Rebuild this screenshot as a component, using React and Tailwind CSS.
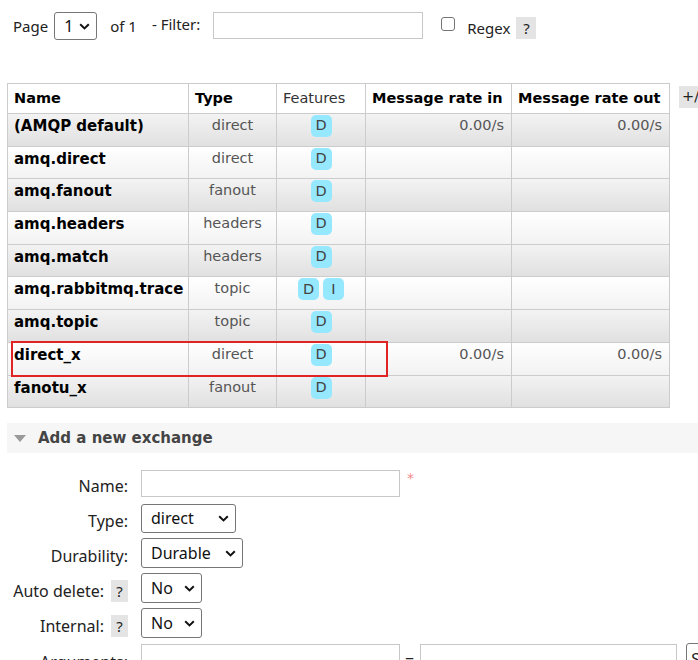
import React from "react";

const rows = [
  { name: "(AMQP default)", type: "direct", f: ["D"], inR: "0.00/s", outR: "0.00/s" },
  { name: "amq.direct", type: "direct", f: ["D"] },
  { name: "amq.fanout", type: "fanout", f: ["D"] },
  { name: "amq.headers", type: "headers", f: ["D"] },
  { name: "amq.match", type: "headers", f: ["D"] },
  { name: "amq.rabbitmq.trace", type: "topic", f: ["D", "I"] },
  { name: "amq.topic", type: "topic", f: ["D"] },
  { name: "direct_x", type: "direct", f: ["D"], inR: "0.00/s", outR: "0.00/s" },
  { name: "fanotu_x", type: "fanout", f: ["D"] },
];

const vf = { fontFamily: '"DejaVu Sans", Verdana, sans-serif' };
const sf = { fontFamily: '"Noto Sans", "Open Sans", sans-serif' };

function Chevron() {
  return (
    <svg width="11" height="7" viewBox="0 0 11 7" className="shrink-0">
      <path d="M1.2 1.2 L5.5 5.4 L9.8 1.2" fill="none" stroke="#111" strokeWidth="2" />
    </svg>
  );
}

function Sel({ w, h = "h-[29px]", size = "text-[16px]", children }) {
  return (
    <div
      className={`flex items-center justify-between rounded-[3px] border border-[#767676] bg-white pl-[9px] pr-[6px] text-[#111] ${size} ${w} ${h}`}
      style={sf}
    >
      <span className="leading-none">{children}</span>
      <Chevron />
    </div>
  );
}

function Help() {
  return (
    <span className="flex h-[22px] w-[17px] items-center justify-center bg-[#e4e4e4] text-[15px] text-[#222]" style={sf}>
      ?
    </span>
  );
}

function Badge({ t }) {
  return (
    <span
      className="flex h-[22px] w-[21px] items-center justify-center rounded-[5px] bg-[#96e8ff] text-[14.5px] text-[#444]"
      style={vf}
    >
      {t}
    </span>
  );
}

function FormRow({ label, help, children, className = "h-[30px] items-center", shift = "translate-y-[3px]" }) {
  return (
    <div className={`flex ${className}`}>
      <div
        className={`flex w-[128px] shrink-0 items-center justify-end gap-[7px] text-[16px] leading-[22px] text-[#222] ${shift}`}
        style={sf}
      >
        <span>{label}</span>
        {help && <Help />}
      </div>
      <div className="ml-[13px] flex items-center">{children}</div>
    </div>
  );
}

const tdBase = "border border-[#cccccc] align-top";

export default function App() {
  return (
    <div className="relative h-[660px] w-[698px] overflow-hidden bg-white text-[#222]">
      {/* top bar */}
      <div className="flex h-[52px] items-start pl-[13px] pt-[12px] text-[15px] leading-[20px] text-[#222]" style={sf}>
        <span className="mt-[4px]">Page</span>
        <div className="ml-[6px]">
          <Sel w="w-[43px]" h="h-[28px]">1</Sel>
        </div>
        <span className="ml-[13px] mt-[4px]">of 1</span>
        <span className="ml-[15px] mt-[2px]">- Filter:</span>
        <div className="ml-[13px] h-[27px] w-[210px] border border-[#c8c8c8] bg-white" />
        <div className="ml-[18px] mt-[5px] h-[14px] w-[14px] rounded-[3px] border border-[#767676] bg-white" />
        <span className="ml-[12px] mt-[6px]">Regex</span>
        <div className="ml-[6px] mt-[5px] flex h-[22px] w-[20px] items-center justify-center bg-[#e4e4e4]">?</div>
      </div>

      {/* table */}
      <div className="ml-[7px] mt-[31px] flex items-start">
        <table className="w-[662px] shrink-0 table-fixed border-collapse" style={vf}>
          <colgroup>
            <col className="w-[181px]" />
            <col className="w-[88px]" />
            <col className="w-[89px]" />
            <col className="w-[146px]" />
            <col className="w-[158px]" />
          </colgroup>
          <thead>
            <tr className="bg-white text-[14.5px] text-black">
              <th className="h-[30px] border border-[#cccccc] px-[6px] text-left font-bold">Name</th>
              <th className="border border-[#cccccc] px-[6px] text-left font-bold">Type</th>
              <th className="border border-[#cccccc] px-[6px] text-left font-normal text-[#333]">Features</th>
              <th className="border border-[#cccccc] px-[6px] text-left font-bold">Message rate in</th>
              <th className="border border-[#cccccc] px-[6px] text-left font-bold">Message rate out</th>
            </tr>
          </thead>
          <tbody>
            {rows.map((r, i) => (
              <tr
                key={r.name}
                className={
                  i % 2 === 0
                    ? "bg-linear-to-b from-[#f3f3f3] to-[#e0e0e0]"
                    : "bg-linear-to-b from-white to-[#f2f2f2]"
                }
              >
                <td className={`${tdBase} h-[32.7px] px-[6px] pt-[3px] text-[15px] font-bold leading-[18px] text-black`}>
                  {r.name}
                </td>
                <td className={`${tdBase} px-[6px] pt-[2px] text-center text-[14.5px] leading-[18px] text-[#555]`}>
                  {r.type}
                </td>
                <td className={`${tdBase} px-[6px] pt-[1px]`}>
                  <div className="flex justify-center gap-[4px]">
                    {r.f.map((t) => (
                      <Badge key={t} t={t} />
                    ))}
                  </div>
                </td>
                <td className={`${tdBase} pl-[6px] pr-[7px] pt-[2px] text-right text-[14.5px] leading-[18px] text-[#555]`}>
                  {r.inR || ""}
                </td>
                <td className={`${tdBase} pl-[6px] pr-[7px] pt-[2px] text-right text-[14.5px] leading-[18px] text-[#555]`}>
                  {r.outR || ""}
                </td>
              </tr>
            ))}
          </tbody>
        </table>
        <div
          className="ml-[9px] mt-[3px] flex h-[22px] w-[40px] shrink-0 items-center bg-[#e4e4e4] pl-[3px] text-[14.5px] text-[#222]"
          style={vf}
        >
          +/-
        </div>
      </div>

      {/* red annotation box */}
      <div className="pointer-events-none absolute left-[11px] top-[341px] h-[36px] w-[377px] border-2 border-[#e02424]" />

      {/* section header */}
      <div className="ml-[7px] mt-[15px] flex h-[30px] items-center bg-[#f6f6f6]">
        <svg width="12" height="7" viewBox="0 0 12 7" className="ml-[7px]">
          <path d="M0 0 L12 0 L6 7 Z" fill="#9a9a9a" />
        </svg>
        <span className="ml-[12px] text-[15px] font-bold text-[#444]" style={vf}>
          Add a new exchange
        </span>
      </div>

      {/* form */}
      <div className="mt-[15px] flex flex-col gap-[5px]">
        <FormRow label="Name:">
          <div className="h-[27px] w-[259px] border border-[#c8c8c8] bg-white" />
          <span className="ml-[7px] -translate-y-[5px] text-[14px] text-[#f28b8b]" style={vf}>*</span>
        </FormRow>
        <FormRow label="Type:">
          <Sel w="w-[95px]">direct</Sel>
        </FormRow>
        <FormRow label="Durability:">
          <Sel w="w-[102px]" h="h-[30px]">Durable</Sel>
        </FormRow>
        <FormRow label="Auto delete:" help>
          <Sel w="w-[61px]" h="h-[30px]">No</Sel>
        </FormRow>
        <FormRow label="Internal:" help>
          <Sel w="w-[61px]" h="h-[30px]">No</Sel>
        </FormRow>
        <FormRow label="Arguments:" className="h-[30px] items-start" shift="translate-y-[8px]">
          <div className="h-[28px] w-[259px] border border-[#c8c8c8] bg-white" />
          <span className="ml-[5px] mt-[4px] text-[16px] text-[#222]" style={sf}>=</span>
          <div className="ml-[6px] h-[28px] w-[257px] border border-[#c8c8c8] bg-white" />
          <div
            className="ml-[9px] flex h-[30px] w-[60px] items-start rounded-[3px] border border-[#767676] pl-[4px] pt-[3px] text-[16px]"
            style={sf}
          >
            String
          </div>
        </FormRow>
      </div>
    </div>
  );
}
